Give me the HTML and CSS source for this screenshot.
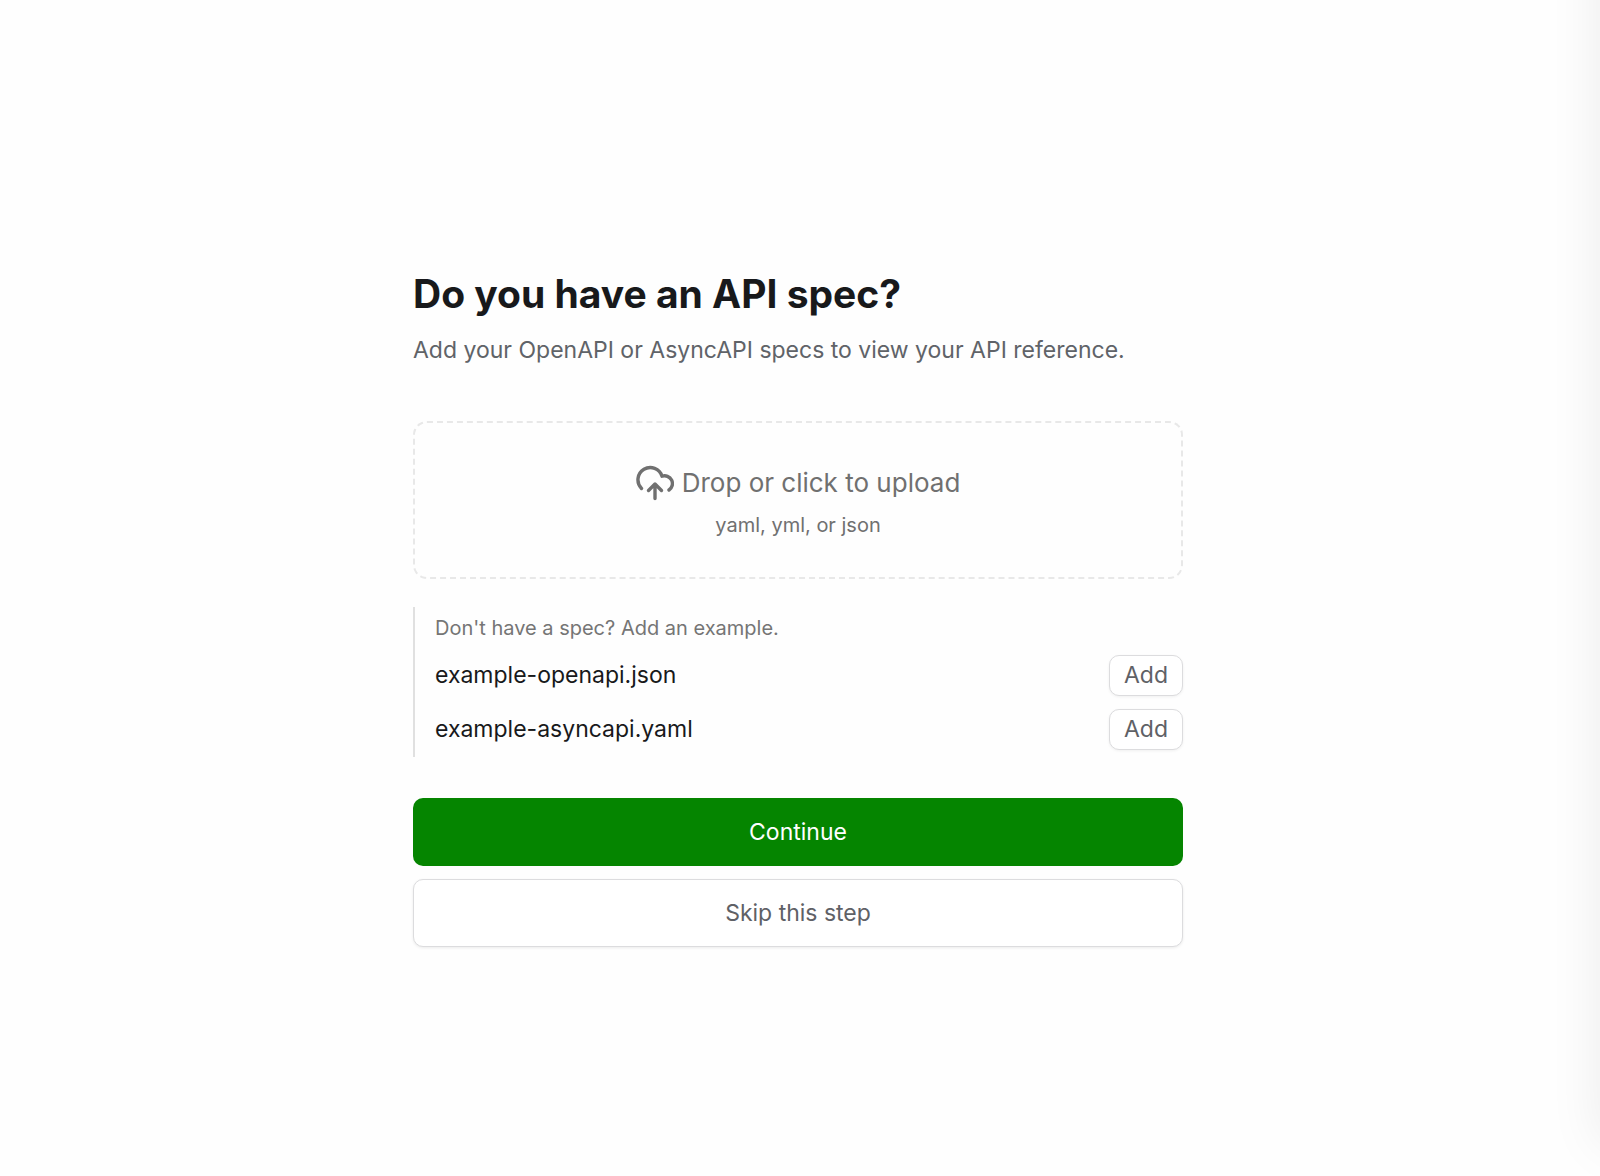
FILE: index.html
```html
<!DOCTYPE html>
<html lang="en">
<head>
  <meta charset="UTF-8">
  <title>Add your API spec</title>
  <meta name="viewport" content="width=device-width, initial-scale=1.0">
  <link rel="stylesheet" href="styles.css">
</head>
<body>
  <main class="setup">
    <h1>Do you have an API spec?</h1>
    <p class="subtitle">Add your OpenAPI or AsyncAPI specs to view your API reference.</p>

    <button type="button" class="dropzone">
      <span class="dropzone-title">
        <svg class="upload-icon" viewBox="0 0 38 36" fill="none" stroke="currentColor" stroke-width="3.4" stroke-linecap="round" stroke-linejoin="round" aria-hidden="true">
          <path d="M5.5 23.5A12.3 12.3 0 1 1 26 11.2A7.8 7.8 0 0 1 33 25"/>
          <path d="M19 33.5V19M12.5 25.5L19 19L25.5 25.5"/>
        </svg>
        Drop or click to upload
      </span>
      <span class="dropzone-hint">yaml, yml, or json</span>
    </button>

    <section class="examples">
      <p class="examples-title">Don't have a spec? Add an example.</p>
      <div class="example-row">
        <span id="openapi">example-openapi.json</span>
        <button type="button" class="add-btn" aria-describedby="openapi">Add</button>
      </div>
      <div class="example-row">
        <span id="asyncapi">example-asyncapi.yaml</span>
        <button type="button" class="add-btn" aria-describedby="asyncapi">Add</button>
      </div>
    </section>

    <div class="actions">
      <button type="button" class="btn btn-primary">Continue</button>
      <button type="button" class="btn btn-secondary">Skip this step</button>
    </div>
  </main>
  <div class="edge-shadow"></div>
</body>
</html>
```

FILE: styles.css
```css
* {
  box-sizing: border-box;
}

body {
  margin: 0;
  padding: 40px 4px 0 0;
  min-height: 100vh;
  display: flex;
  align-items: center;
  justify-content: center;
  overflow: hidden;
  background: #fefefe;
  color: #18191b;
  font-family: Inter, "Liberation Sans", sans-serif;
  font-size: 23px;
  line-height: 32px;
}

h1, p {
  margin: 0;
}

button {
  font: inherit;
  cursor: pointer;
}

.setup {
  width: 100%;
  max-width: 770px;
}

h1 {
  font-size: 39px;
  line-height: 48px;
  font-weight: 700;
  margin-bottom: 16px;
}

.subtitle {
  color: #606368;
}

.dropzone {
  display: flex;
  flex-direction: column;
  align-items: center;
  justify-content: center;
  gap: 12px;
  width: 100%;
  height: 158px;
  padding-top: 4px;
  margin: 55px 0 28px;
  border: 2px dashed #e8e8e8;
  border-radius: 14px;
  background: none;
  color: #707070;
}

.dropzone-title {
  display: flex;
  align-items: center;
  gap: 8px;
  font-size: 26px;
}

.upload-icon {
  width: 38px;
  height: 36px;
}

.dropzone-hint {
  font-size: 20px;
  line-height: 24px;
}

.examples {
  display: flex;
  flex-direction: column;
  gap: 13px;
  padding: 8px 0 7px 20px;
  border-left: 2px solid #e0e0e0;
}

.examples-title {
  color: #757575;
  font-size: 20px;
  line-height: 27px;
}

.example-row {
  display: flex;
  align-items: center;
  justify-content: space-between;
}

.add-btn {
  height: 41px;
  padding: 0 14px;
  border: 1px solid #dcdcde;
  border-radius: 10px;
  background: #fff;
  color: #5f6166;
  box-shadow: 0 1px 3px rgba(0, 0, 0, 0.06);
}

.actions {
  display: flex;
  flex-direction: column;
  gap: 13px;
  margin-top: 41px;
}

.btn {
  height: 68px;
  border-radius: 10px;
}

.btn-primary {
  border: none;
  background: #058500;
  color: #fff;
}

.btn-secondary {
  border: 1px solid #dcdcde;
  background: #fff;
  color: #5f6166;
  box-shadow: 0 1px 3px rgba(0, 0, 0, 0.08);
}

/* shadow cast by the panel past the right edge */
.edge-shadow {
  position: fixed;
  top: -100px;
  bottom: 32px;
  left: 100%;
  width: 200px;
  box-shadow: 0 0 50px rgba(0, 0, 0, 0.08);
}
```
